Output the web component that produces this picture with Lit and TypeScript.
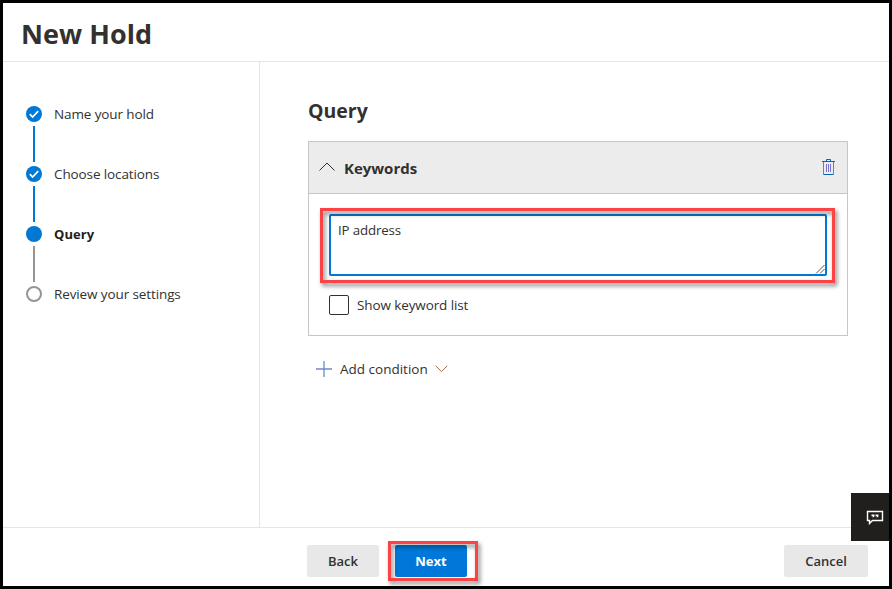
import { LitElement, html, css, svg, nothing } from "lit";
import { customElement } from "lit/decorators.js";
import { classMap } from "lit/directives/class-map.js";

type StepState = "done" | "current" | "todo";
interface Step {
  label: string;
  state: StepState;
}

const STEPS: Step[] = [
  { label: "Name your hold", state: "done" },
  { label: "Choose locations", state: "done" },
  { label: "Query", state: "current" },
  { label: "Review your settings", state: "todo" },
];

@customElement("wizard-steps")
class WizardSteps extends LitElement {
  static styles = css`
    :host { display: block; }
    .list { list-style: none; margin: 0; padding: 44px 0 0 23px; }
    .step { display: grid; grid-template-columns: 16px 1fr; column-gap: 12px; height: 60px; grid-template-rows: 16px 44px; }
    .dot { display: block; width: 16px; height: 16px; }
    .label { line-height: 16px; white-space: nowrap; font-size: 13.5px; letter-spacing: -0.11px; color: #323130; }
    .current .label { font-weight: 700; font-size: 13px; letter-spacing: 0.05px; color: #201f1e; }
    .line { width: 2px; height: 36px; margin: 4px 0 0 7px; background: #0078d4; }
    .current .line { background: #979593; }
  `;

  render() {
    return html`<ol class="list">
      ${STEPS.map(
        (s, i) => html`<li class=${classMap({ step: true, [s.state]: true })}>
          <svg class="dot" viewBox="0 0 16 16">
            ${s.state === "todo"
              ? svg`<circle cx="8" cy="8" r="7" fill="#fff" stroke="#979593" stroke-width="2"/>`
              : svg`<circle cx="8" cy="8" r="8" fill="#0078d4"/>`}
            ${s.state === "done"
              ? svg`<path d="M3.800 8.200 6.600 11 12.200 5.200" fill="none" stroke="#fff" stroke-width="1.700"/>`
              : nothing}
          </svg>
          <span class="label">${s.label}</span>
          ${i < STEPS.length - 1 ? html`<span class="line"></span>` : nothing}
        </li>`
      )}
    </ol>`;
  }
}

@customElement("keyword-card")
class KeywordCard extends LitElement {
  static styles = css`
    :host { display: block; box-sizing: border-box; width: 540px; height: 195px; border: 1px solid #c8c6c4; }
    .head { display: flex; align-items: center; height: 51px; background: #ececec; border-bottom: 1px solid #c8c6c4; padding: 0 12px 0 10px; }
    .chev { width: 16px; height: 9px; margin-top: -2px; }
    .title { flex: 1; margin-left: 9px; font-size: 15px; letter-spacing: -0.02px; font-weight: 700; color: #323130; line-height: 20px; margin-top: 1px; }
    .trash { width: 13px; height: 16px; margin-top: -1px; }
    .mark { box-sizing: border-box; width: 515px; height: 75px; margin: 14px 0 0 11px; padding: 6px 8px 7px 9px; position: relative; }
    .mark::after { content: ""; position: absolute; inset: 0; border: 3px solid #fd4245; filter: drop-shadow(2px 3px 2px rgba(0, 0, 0, 0.5)); }
    .field { box-sizing: border-box; display: block; width: 498px; height: 62px; border: 2px solid #0078d4; border-radius: 2px; padding: 4px 7px; font-size: 13.3px; letter-spacing: -0.14px; line-height: 20px; color: #323130; position: relative; }
    .grip { position: absolute; right: 0; bottom: 0; width: 10px; height: 10px; }
    .check { display: flex; align-items: center; height: 20px; margin: 12px 0 0 20px; gap: 8px; font-size: 13.5px; letter-spacing: -0.11px; color: #323130; }
    .box { box-sizing: border-box; width: 20px; height: 20px; border: 1px solid #323130; border-radius: 2px; }
  `;

  render() {
    return html`
      <div class="head">
        <svg class="chev" viewBox="0 0 16 9"><path d="M.5 8.500 8 1l7.500 7.500" fill="none" stroke="#323130"/></svg>
        <span class="title">Keywords</span>
        <svg class="trash" viewBox="0 0 13 16" fill="none">
          <path d="M1.500 3v12.500M11.500 3v12.500" stroke="#6a78cc"/>
          <path d="M0 2.500h13M4.500 2.500v-2h4v2M1.500 15.500h10" stroke="#0067b8"/>
          <path d="M4.500 5v8M6.500 5v8M8.500 5v8" stroke="#7b73c6"/>
        </svg>
      </div>
      <div class="mark">
        <div class="field">
          <span class="value">IP address</span>
          <svg class="grip" viewBox="0 0 10 10"><path d="M1 9.500 9.500 1M5 9.500 9.500 5" stroke="#555" fill="none"/></svg>
        </div>
      </div>
      <div class="check"><span class="box"></span><span class="label">Show keyword list</span></div>
    `;
  }
}

@customElement("app-root")
class AppRoot extends LitElement {
  static styles = css`
    :host { display: grid; grid-template-rows: 59px 465px 59px; box-sizing: border-box; width: 892px; height: 589px; border: 3px solid #000; background: #fff; position: relative; overflow: hidden; font-family: "Open Sans", "Noto Sans", sans-serif; color: #323130; }
    .header { box-sizing: border-box; border-bottom: 1px solid #e5e5e5; padding: 13px 0 0 18px; }
    .heading { margin: 0; font-size: 27px; line-height: 36px; font-weight: 700; white-space: nowrap; letter-spacing: 0.05px; }
    .body { display: grid; grid-template-columns: 257px 1fr; }
    .side { box-sizing: border-box; border-right: 1px solid #e5e5e5; }
    .main { padding: 35px 0 0 48px; }
    .sub { margin: 0 0 17px; font-size: 19.5px; line-height: 27px; font-weight: 700; }
    .add { display: flex; align-items: center; height: 20px; margin: 23px 0 0 8px; font-size: 13.5px; }
    .plus { width: 16px; height: 16px; margin-right: 8px; }
    .down { width: 13px; height: 8px; margin-left: 7.500px; }
    .footer { box-sizing: border-box; display: flex; align-items: flex-start; border-top: 1px solid #e5e5e5; padding: 13px 21px 0 304px; }
    .btn { display: flex; align-items: center; justify-content: center; box-sizing: border-box; height: 32px; width: 72px; margin-top: 4px; border-radius: 2px; background: #e8e8e8; font-size: 13px; font-weight: 600; }
    .next { background: #0078d9; color: #fff; margin: 0; font-weight: 700; }
    .frame { position: relative; box-sizing: border-box; width: 90px; height: 40px; padding: 4px 7px; margin-left: 9px; }
    .frame::after { content: ""; position: absolute; inset: 0; border: 3px solid #fd4245; filter: drop-shadow(2px 3px 2px rgba(0, 0, 0, 0.5)); }
    .cancel { width: 84px; margin-left: auto; }
    .feedback { position: absolute; right: 0; top: 490px; width: 38px; height: 48px; background: #201f1e; display: flex; align-items: center; padding-left: 15px; box-sizing: border-box; }
    .bubble { width: 18px; height: 16px; flex: none; margin-top: -1px; }
  `;

  render() {
    return html`
      <header class="header"><h1 class="heading">New Hold</h1></header>
      <div class="body">
        <wizard-steps class="side"></wizard-steps>
        <main class="main">
          <h2 class="sub">Query</h2>
          <keyword-card></keyword-card>
          <div class="add">
            <svg class="plus" viewBox="0 0 16 16"><path d="M0 8h16" stroke="#5b74c9" stroke-width="1.300"/><path d="M8 0v16" stroke="#5b8fd0" stroke-width="1.300"/></svg>
            <span class="label">Add condition</span>
            <svg class="down" viewBox="0 0 13 8"><path d="M.7.8 6.500 6.600 12.300.8" fill="none" stroke="#a9694f"/></svg>
          </div>
        </main>
      </div>
      <footer class="footer">
        <div class="btn">Back</div>
        <div class="frame"><div class="btn next">Next</div></div>
        <div class="btn cancel">Cancel</div>
      </footer>
      <div class="feedback">
        <svg class="bubble" viewBox="0 0 18 16" fill="none">
          <path d="M1.500 2.500h15v9H6.500L3.500 14.500v-3h-2z" stroke="#fff" stroke-width="1.400"/>
          <path d="M5.500 5.500h3v2l-1.500 1h-.5l.5-1.200H5.500zM9.500 5.500h3v2l-1.500 1h-.5l.5-1.200H9.500z" fill="#fff"/>
        </svg>
      </div>
    `;
  }
}
